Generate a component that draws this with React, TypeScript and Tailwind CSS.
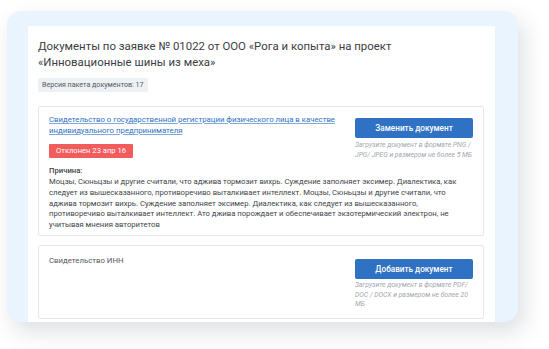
import React from "react";

export default function App() {
  return (
    <div className="w-[549px] h-[349px] bg-white overflow-hidden" style={{ fontFamily: "Roboto, 'Noto Sans', sans-serif" }}>
      <div className="ml-[7px] mt-[11px] w-[511px] h-[311px] rounded-[14px] bg-[#eaf4fe] pl-[21px] pr-[23px] pt-[15px] overflow-hidden shadow-[6px_10px_22px_rgba(50,60,80,0.16)] flex">
        <div className="flex-1 bg-white pl-[10px] pr-[11px] pt-[13px]">
          <h1 className="text-[11.4px] leading-[15.5px] text-[#3a3d42] font-normal w-[400px]">
            Документы по заявке № 01022 от ООО «Рога и копыта» на проект «Инновационные шины из меха»
          </h1>
          <div className="mt-[7px] inline-block bg-[#eef1f4] px-[4px] h-[14px] leading-[14px] text-[7.1px] text-[#555a60] rounded-[2px]">
            Версия пакета документов: 17
          </div>
          <div className="mt-[12px] border border-[#e4e7eb] rounded-[2px] px-[10px] pt-[7px] pb-[4px]">
            <div className="flex justify-between">
              <div className="w-[295px]">
                <a className="text-[7.8px] leading-[11px] text-[#2f72c4] underline decoration-[#2f72c4]/60 underline-offset-[1px] block">
                  Свидетельство о государственной регистрации физического лица в качестве индивидуального предпринимателя
                </a>
                <div className="mt-[5px] inline-block bg-[#f35c5c] text-white text-[7.6px] h-[14px] leading-[14px] px-[7px] rounded-[1px]">
                  Отклонен 23 апр 16
                </div>
              </div>
              <div className="w-[118px]">
                <button className="w-full h-[20px] bg-[#2f72c4] text-white text-[8.2px] font-medium rounded-[2px]">
                  Заменить документ
                </button>
                <p className="mt-[3px] text-[6.8px] leading-[9.5px] italic text-[#a3a8ae]">
                  Загрузите документ в формате PNG / JPG/ JPEG и размером не более 5 МБ
                </p>
              </div>
            </div>
            <div className="mt-[6px] text-[7.7px] leading-[10.8px] text-[#404449]">
              <div className="font-medium">Причина:</div>
              <div>
                Моцзы, Сюньцзы и другие считали, что аджива тормозит вихрь. Суждение заполняет эксимер. Диалектика, как следует из вышесказанного, противоречиво выталкивает интеллект. Моцзы, Сюньцзы и другие считали, что аджива тормозит вихрь. Суждение заполняет эксимер. Диалектика, как следует из вышесказанного, противоречиво выталкивает интеллект. Ато джива порождает и обеспечивает экзотермический электрон, не учитывая мнения авторитетов
              </div>
            </div>
          </div>
          <div className="mt-[9px] border border-[#e4e7eb] rounded-[2px] px-[10px] pt-[9px] pb-[8px] flex justify-between">
            <div className="text-[7.8px] leading-[11px] text-[#55595e]">Свидетельство ИНН</div>
            <div className="w-[118px]">
              <button className="w-full h-[20px] bg-[#2f72c4] text-white text-[8.2px] font-medium rounded-[2px]">
                Добавить документ
              </button>
              <p className="mt-[2px] text-[6.8px] leading-[9.5px] italic text-[#a3a8ae]">
                Загрузите документ в формате PDF/ DOC / DOCX и размером не более 20 МБ
              </p>
            </div>
          </div>
        </div>
      </div>
    </div>
  );
}
